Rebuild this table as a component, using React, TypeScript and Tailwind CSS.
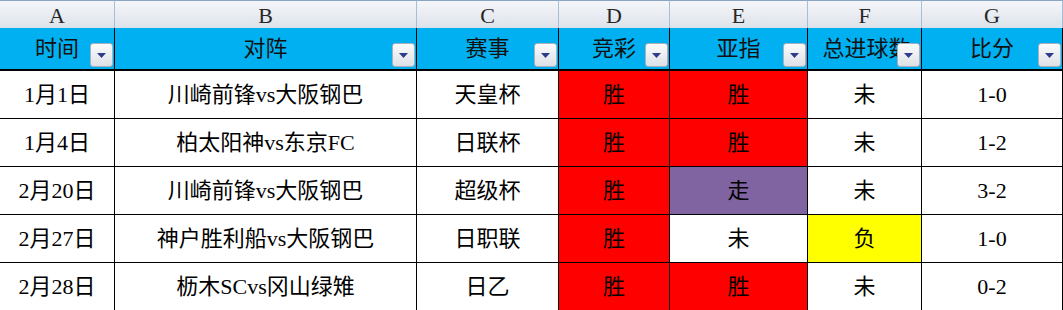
import { ReactNode } from 'react'

type Row = {
  date: string
  match: string
  cup: string
  jc: string
  yz: string
  total: string
  score: string
}

const rows: Row[] = [
  { date: '1月1日',  match: '川崎前锋vs大阪钢巴',   cup: '天皇杯', jc: '胜', yz: '胜', total: '未', score: '1-0' },
  { date: '1月4日',  match: '柏太阳神vs东京FC',     cup: '日联杯', jc: '胜', yz: '胜', total: '未', score: '1-2' },
  { date: '2月20日', match: '川崎前锋vs大阪钢巴',   cup: '超级杯', jc: '胜', yz: '走', total: '未', score: '3-2' },
  { date: '2月27日', match: '神户胜利船vs大阪钢巴', cup: '日职联', jc: '胜', yz: '未', total: '负', score: '1-0' },
  { date: '2月28日', match: '枥木SCvs冈山绿雉',     cup: '日乙',   jc: '胜', yz: '胜', total: '未', score: '0-2' },
]

const letters = ['A', 'B', 'C', 'D', 'E', 'F', 'G']
const heads = ['时间', '对阵', '赛事', '竞彩', '亚指', '总进球数', '比分']

// cell fill for the result columns
function fill(v: string) {
  if (v === '胜') return 'bg-[#ff0000]'
  if (v === '走') return 'bg-[#8064a2]'
  if (v === '负') return 'bg-[#ffff00]'
  return 'bg-white'
}

function FilterButton() {
  return (
    <div className="absolute right-[1px] bottom-[2px] w-[23px] h-[24px] rounded-[3px] border border-[#a9b0bb] bg-gradient-to-b from-[#fbfbfc] to-[#dde1e6] flex items-center justify-center">
      <svg width="9" height="5" viewBox="0 0 9 5">
        <path d="M0 0 H9 L4.5 5 Z" fill="#2e3c8c" />
      </svg>
    </div>
  )
}

function Cell({ children, className = '' }: { children: ReactNode; className?: string }) {
  return (
    <div className={`h-[48px] border-r border-b border-black flex items-center justify-center text-[22px] text-black ${className}`}>
      {children}
    </div>
  )
}

export default function App() {
  return (
    <div
      className="w-[1063px] h-[310px] overflow-hidden bg-white"
      style={{ fontFamily: '"Liberation Serif", "Noto Sans CJK SC", serif' }}
    >
      <div className="grid grid-cols-[115px_302px_142px_111px_138px_114px_141px]">
        {/* column letters */}
        {letters.map(l => (
          <div
            key={l}
            className="h-[28px] border-t border-t-[#8aa5c6] border-r border-r-[#a9bed6] bg-gradient-to-b from-[#f5f6f9] to-[#dde3eb] flex items-center justify-center text-[22px] text-[#262626] leading-none pt-[2px]"
          >
            {l}
          </div>
        ))}

        {/* header row */}
        {heads.map((h, i) => (
          <div
            key={h}
            className="relative h-[43px] bg-[#00b0f0] border-r border-b-2 border-black flex items-center justify-center overflow-hidden"
          >
            <span className={`text-[22px] text-[#111] whitespace-nowrap ${i === 5 ? 'pl-[4px]' : ''}`}>{h}</span>
            <FilterButton />
          </div>
        ))}

        {/* data rows */}
        {rows.map(r => (
          <div key={r.date} className="contents">
            <Cell>{r.date}</Cell>
            <Cell>{r.match}</Cell>
            <Cell>{r.cup}</Cell>
            <Cell className={fill(r.jc)}>{r.jc}</Cell>
            <Cell className={fill(r.yz)}>{r.yz}</Cell>
            <Cell className={fill(r.total)}>{r.total}</Cell>
            <Cell>{r.score}</Cell>
          </div>
        ))}
      </div>
    </div>
  )
}
